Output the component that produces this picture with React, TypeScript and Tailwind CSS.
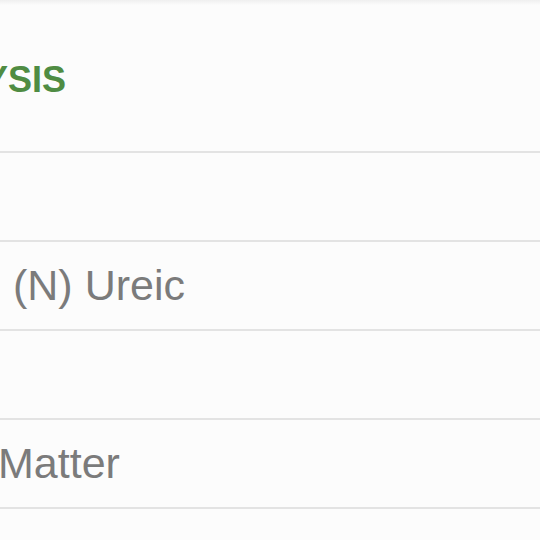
export default function App() {
  const rows = [
    { label: "", ml: "ml-0" },
    { label: "(N) Ureic", ml: "ml-[13px]" },
    { label: "", ml: "ml-0" },
    { label: "Matter", ml: "ml-[-2px]" },
    { label: "", ml: "ml-0" },
  ];

  return (
    <div className="w-[540px] h-[540px] overflow-hidden bg-[#fcfcfc] font-['Liberation_Sans',Arial,sans-serif]">
      {/* top edge shadow */}
      <div className="h-[5px] bg-gradient-to-b from-[#efefef] to-[#fcfcfc]" />

      {/* section header */}
      <div className="h-[148px] pt-[4px] flex items-center border-b-2 border-[#e3e3e3] whitespace-nowrap">
        <span className="ml-[-16px] text-[36px] font-bold text-[#4f8c43] leading-none">
          YSIS
        </span>
      </div>

      {rows.map((r, i) => (
        <div
          key={i}
          className="h-[89px] flex items-center border-b-2 border-[#e3e3e3] whitespace-nowrap"
        >
          <span className={`${r.ml} text-[43px] text-[#7b7b7b] leading-none`}>
            {r.label}
          </span>
        </div>
      ))}
    </div>
  );
}
